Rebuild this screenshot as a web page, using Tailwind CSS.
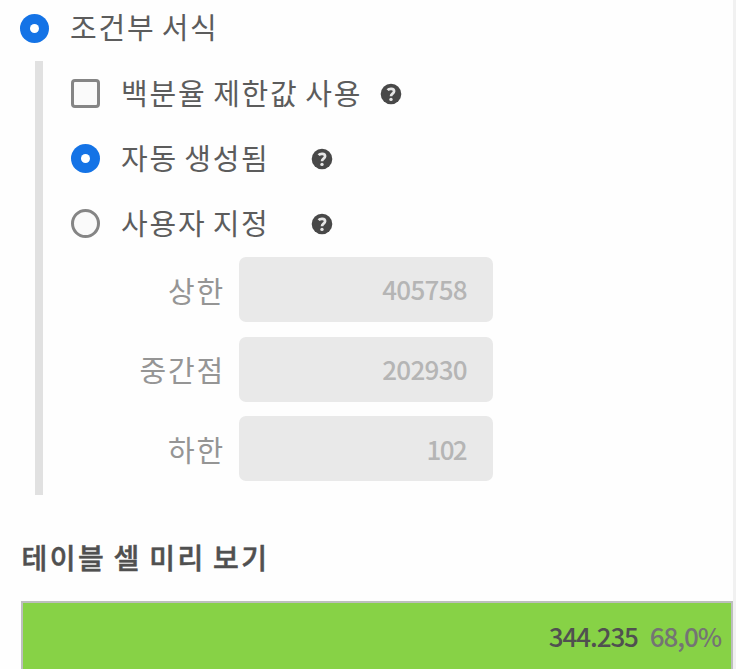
<!DOCTYPE html>
<html lang="ko">
<head>
<meta charset="utf-8">
<title>조건부 서식</title>
<script src="https://cdn.jsdelivr.net/npm/@tailwindcss/browser@4"></script>
</head>
<body class="h-[669px] w-[736px] overflow-hidden bg-[#fefefe] font-['Noto_Sans_CJK_KR',sans-serif] text-[#5c5c5c]">
<svg class="hidden">
  <symbol id="help" viewBox="0 0 22 22">
    <circle cx="11" cy="11" r="10.3" fill="#484848"/>
    <path d="M7.6 7.1C9 5.5 14.1 5 14.1 8.3C14.1 10.8 11 10.6 11 13.2" fill="none" stroke="#e6e6e6" stroke-width="2.7"/>
    <circle cx="11" cy="16.4" r="1.7" fill="#e6e6e6"/>
  </symbol>
</svg>
<main class="flex h-full flex-col border-r-3 border-[#f1f1f1] pl-5">
  <label class="mt-[7px] flex h-[42px] shrink-0 items-center">
    <span class="ml-[0.4px] flex size-[29px] items-center justify-center rounded-full bg-[#1473e6]"><span class="size-[9px] rounded-full bg-white"></span></span>
    <span class="ml-[20.6px] pb-1 text-[29px]/[42px] tracking-[1.8px] [word-spacing:-3.7px]">조건부 서식</span>
  </label>
  <section class="mt-[12px] ml-[15px] h-[434px] w-[480px] shrink-0 border-l-8 border-[#e1e1e1] pl-[28.4px]">
    <div class="flex h-[65px] items-center">
      <span class="size-[29px] rounded-[4px] border-3 border-[#858585] bg-[#fafafa]"></span>
      <span class="ml-[20.6px] w-[240px] pb-1 text-[29px]/[42px] tracking-[1.8px] whitespace-nowrap [word-spacing:-3.2px]">백분율 제한값 사용</span>
      <svg class="ml-[19px] size-[22px]"><use href="#help"/></svg>
    </div>
    <div class="flex h-[65px] items-center">
      <span class="flex size-[29px] items-center justify-center rounded-full bg-[#1473e6]"><span class="size-[9px] rounded-full bg-white"></span></span>
      <span class="ml-[20.6px] w-[170px] pb-1 text-[29px]/[42px] tracking-[1.8px] [word-spacing:-3.7px]">자동 생성됨</span>
      <svg class="ml-[20px] size-[22px]"><use href="#help"/></svg>
    </div>
    <div class="flex h-[65px] items-center">
      <span class="size-[29px] rounded-full border-3 border-[#858585] bg-[#fafafa]"></span>
      <span class="ml-[20.6px] w-[170px] pb-1 text-[29px]/[42px] tracking-[1.8px] [word-spacing:-3.7px]">사용자 지정</span>
      <svg class="ml-[20px] size-[22px]"><use href="#help"/></svg>
    </div>
    <div class="mt-px grid grid-cols-[153.6px_254px] gap-x-[14px] gap-y-[14.5px] text-[#959595]">
      <span class="self-center text-right text-[29px]/[42px] tracking-[1.8px]">상한</span>
      <div class="flex h-[65px] items-center justify-end rounded-[7px] bg-[#e9e9e9] pr-[26px] pb-[2px] text-[26px] font-medium tracking-[-0.7px] text-[#b5b5b5]">405758</div>
      <span class="self-center text-right text-[29px]/[42px] tracking-[1.8px]">중간점</span>
      <div class="flex h-[65px] items-center justify-end rounded-[7px] bg-[#e9e9e9] pr-[26px] pb-px text-[26px] font-medium tracking-[-0.7px] text-[#b5b5b5]">202930</div>
      <span class="self-center text-right text-[29px]/[42px] tracking-[1.8px]">하한</span>
      <div class="flex h-[65px] items-center justify-end rounded-[7px] bg-[#e9e9e9] pr-[27px] pb-px text-[26px] font-medium tracking-[-1.7px] text-[#b5b5b5]">102</div>
    </div>
  </section>
  <h2 class="mt-[40px] ml-[1.5px] shrink-0 text-[28px]/[44px] font-medium tracking-[2.5px] text-[#505050] [-webkit-text-stroke:0.5px_#505050] [word-spacing:-3px]">테이블 셀 미리 보기</h2>
  <div class="mt-[22px] ml-px flex h-[90px] shrink-0 justify-end gap-[12px] border-2 border-[#bdbfbd] bg-[#87d246] pt-[12px] pr-[10px] text-[26px]/[42px] font-medium tracking-[-1.1px]">
    <span class="text-[#505050]">344.235</span><span class="text-[#747474]">68,0%</span>
  </div>
</main>
</body>
</html>
